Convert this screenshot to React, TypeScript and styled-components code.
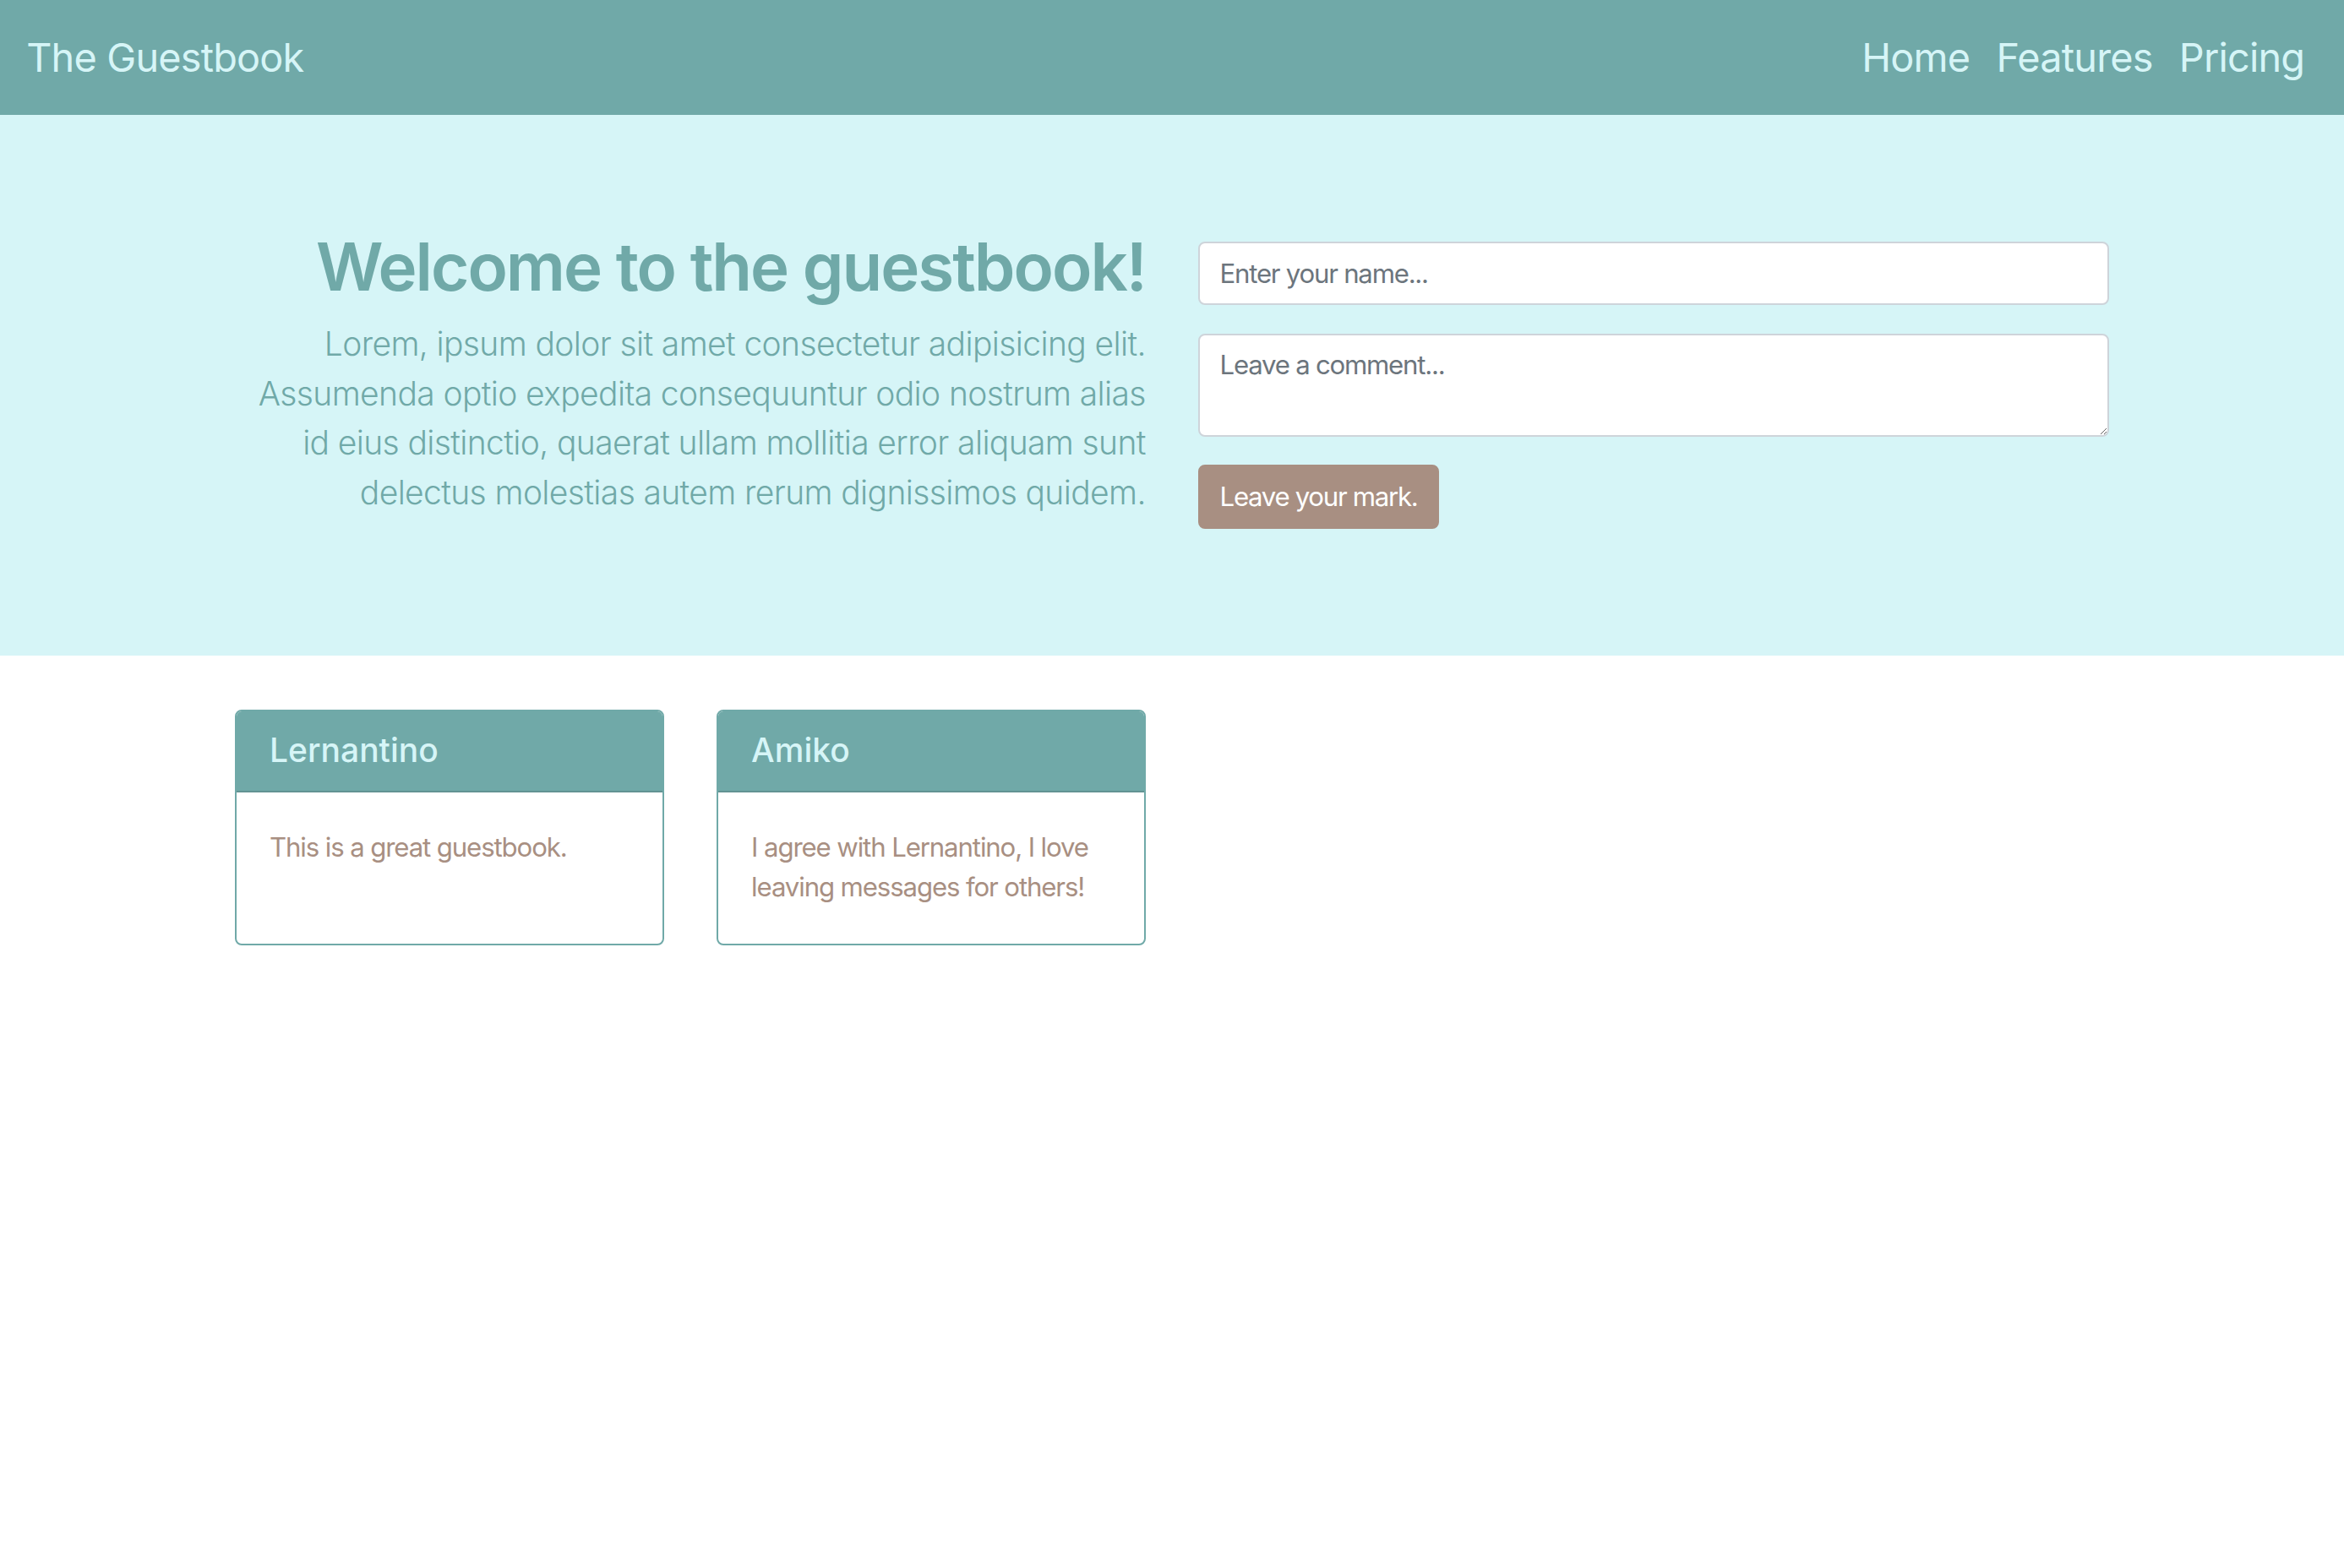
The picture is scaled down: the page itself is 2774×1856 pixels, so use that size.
import React from "react";
import styled, { createGlobalStyle } from "styled-components";

const teal = "#70a9a8";
const aqua = "#d6f5f7";
const taupe = "#a88f82";

// the page was drawn at roughly 1.95x, so 1rem here is 31.2px
const rem = (n: number) => `${(n * 31.2).toFixed(1)}px`;

interface Entry {
  name: string;
  comment: string;
}

const entries: Entry[] = [
  { name: "Lernantino", comment: "This is a great guestbook." },
  { name: "Amiko", comment: "I agree with Lernantino, I love leaving messages for others!" },
];

const GlobalStyle = createGlobalStyle`
  * {
    box-sizing: border-box;
  }

  body {
    margin: 0;
    background: #fff;
    font-family: Inter, "Noto Sans", "Liberation Sans", sans-serif;
  }
`;

export default function App() {
  return (
    <>
      <GlobalStyle />
      <Navbar>
        <Brand href="#">The Guestbook</Brand>
        <NavList>
          <NavLink href="#">Home</NavLink>
          <NavLink href="#">Features</NavLink>
          <NavLink href="#">Pricing</NavLink>
        </NavList>
      </Navbar>

      <Hero>
        <Container>
          <HeroRow>
            <HeroText>
              <Title>Welcome to the guestbook!</Title>
              <Lead>
                Lorem, ipsum dolor sit amet consectetur adipisicing elit. Assumenda optio expedita
                consequuntur odio nostrum alias id eius distinctio, quaerat ullam mollitia error
                aliquam sunt delectus molestias autem rerum dignissimos quidem.
              </Lead>
            </HeroText>
            <Form onSubmit={(e) => e.preventDefault()}>
              <NameInput type="text" placeholder="Enter your name..." />
              <CommentInput rows={2} placeholder="Leave a comment..." />
              <SubmitBtn type="submit">Leave your mark.</SubmitBtn>
            </Form>
          </HeroRow>
        </Container>
      </Hero>

      <Container>
        <CardGrid>
          {entries.map((entry) => (
            <Card key={entry.name}>
              <CardHeader>
                <CardTitle>{entry.name}</CardTitle>
              </CardHeader>
              <CardBody>
                <CardText>{entry.comment}</CardText>
              </CardBody>
            </Card>
          ))}
        </CardGrid>
      </Container>
    </>
  );
}

const Navbar = styled.nav`
  display: flex;
  justify-content: space-between;
  align-items: center;
  height: 136px;
  padding: 0 ${rem(1)};
  background: ${teal};
`;

const Brand = styled.a`
  font-size: ${rem(1.5)};
  line-height: 1.5;
  letter-spacing: -0.017em;
  color: ${aqua};
  text-decoration: none;
`;

const NavList = styled.div`
  display: flex;
  align-items: center;
`;

const NavLink = styled.a`
  padding: 0 ${rem(0.5)};
  font-size: ${rem(1.5)};
  line-height: 1.5;
  letter-spacing: -0.017em;
  color: ${aqua};
  text-decoration: none;
`;

const Hero = styled.header`
  display: flex;
  align-items: center;
  height: 640px;
  background: ${aqua};
`;

const Container = styled.div`
  width: 2218px;
  margin: 0 auto;
`;

const HeroRow = styled.div`
  display: grid;
  grid-template-columns: 1fr 1fr;
  column-gap: ${rem(2)};
  align-items: center;
`;

const HeroText = styled.div`
  text-align: right;
  color: ${teal};
`;

const Title = styled.h1`
  margin: 0 0 ${rem(0.5)};
  font-size: ${rem(2.5)};
  font-weight: 600;
  line-height: 1.2;
  letter-spacing: -0.026em;
`;

const Lead = styled.p`
  margin: 0 0 ${rem(1)};
  font-size: ${rem(1.25)};
  font-weight: 300;
  line-height: 1.5;
  letter-spacing: -0.016em;
`;

const Form = styled.form`
  display: flex;
  flex-direction: column;
  align-items: flex-start;
`;

const fieldStyles = `
  width: 100%;
  padding: ${rem(0.375)} ${rem(0.75)};
  border: 2px solid #ced4da;
  border-radius: 8px;
  background: #fff;
  font-family: inherit;
  font-size: ${rem(1)};
  line-height: 1.5;
  letter-spacing: -0.04em;
  color: #495057;

  &::placeholder {
    color: #6c757d;
  }
`;

const NameInput = styled.input`
  ${fieldStyles}
  height: 75px;
`;

const CommentInput = styled.textarea`
  ${fieldStyles}
  height: 122px;
  margin-top: 34px;
  resize: vertical;
`;

const SubmitBtn = styled.button`
  height: 76px;
  margin-top: 33px;
  padding: 0 ${rem(0.75)};
  border: 2px solid ${taupe};
  border-radius: 8px;
  background: ${taupe};
  font-family: inherit;
  font-size: ${rem(1)};
  line-height: 1.5;
  letter-spacing: -0.042em;
  color: #fff;
  cursor: pointer;
`;

const CardGrid = styled.div`
  display: grid;
  grid-template-columns: repeat(4, 1fr);
  column-gap: ${rem(2)};
  padding-top: 64px;
`;

const Card = styled.div`
  display: flex;
  flex-direction: column;
  border: 2px solid ${teal};
  border-radius: 8px;
  overflow: hidden;
  background: #fff;
`;

const CardHeader = styled.div`
  padding: ${rem(0.75)} ${rem(1.25)};
  border-bottom: 2px solid rgba(0, 0, 0, 0.125);
  background: ${teal};
`;

const CardTitle = styled.h5`
  margin: 0;
  font-size: ${rem(1.25)};
  font-weight: 500;
  line-height: 1.2;
  color: ${aqua};
`;

const CardBody = styled.div`
  flex: 1;
  padding: 42px ${rem(1.25)} 43px;
`;

const CardText = styled.p`
  margin: 0;
  font-size: ${rem(1)};
  line-height: 1.52;
  letter-spacing: -0.036em;
  color: ${taupe};
`;
